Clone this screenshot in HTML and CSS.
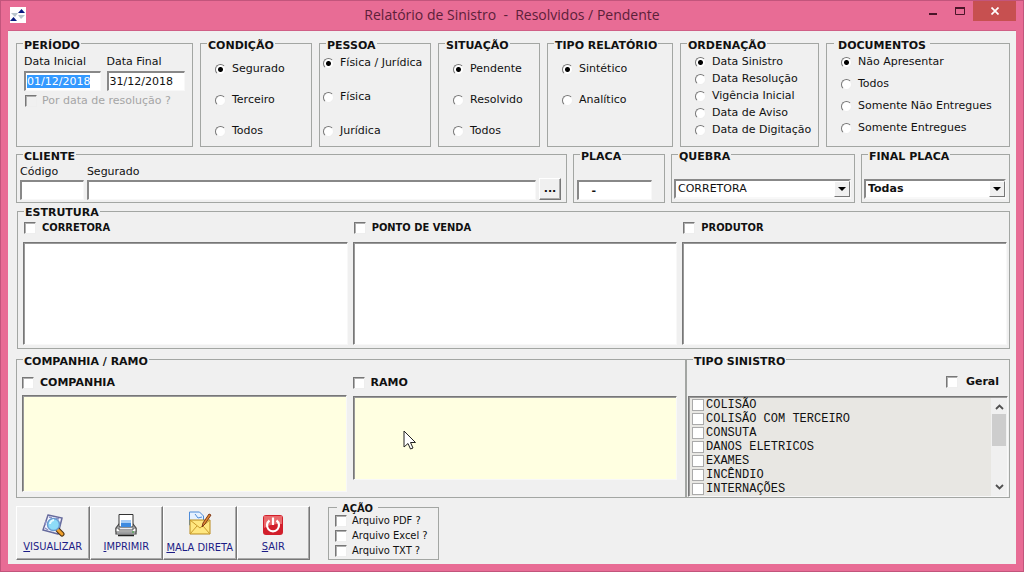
FILE: index.html
```html
<!DOCTYPE html>
<html lang="pt-BR">
<head>
<meta charset="utf-8">
<title>Relatório de Sinistro</title>
<link rel="stylesheet" href="styles.css">
</head>
<body>
<div class="window">
  <header class="titlebar">
    <svg class="app-icon" viewBox="0 0 16 16" aria-hidden="true">
      <rect width="16" height="16" fill="#fff"/>
      <path d="M1 6h7l-3 4zM8 8h7l-4 4z" fill="#b9c4cc"/>
      <path d="M8 6h7l-3.500-4zM0 14h7l-3.500-4z" fill="#0a1a80"/>
    </svg>
    <h1 class="title">Relatório de Sinistro  -  Resolvidos / Pendente</h1>
    <div class="controls">
      <button class="ctl" aria-label="Minimizar"><svg width="10" height="12" viewBox="0 0 10 12"><path d="M1 9h8" stroke="#4a1529" stroke-width="2"/></svg></button>
      <button class="ctl" aria-label="Maximizar"><svg width="10" height="10" viewBox="0 0 10 10"><path d="M.5 1v7.500h9V1" fill="none" stroke="#4a1529"/><path d="M0 2h10" stroke="#4a1529" stroke-width="2"/></svg></button>
      <button class="ctl close" aria-label="Fechar"><svg width="8" height="8" viewBox="0 0 8 8"><path d="M.5.5l7 7M7.500.5l-7 7" stroke="#fff" stroke-width="1.700"/></svg></button>
    </div>
  </header>

  <main class="client">
    <div class="row filters">
      <fieldset class="group">
        <legend>PERÍODO</legend>
        <div class="period">
          <div class="field date-start"><label for="di">Data Inicial</label><input class="box" id="di" type="text" value="01/12/2018"></div>
          <div class="field date-end"><label for="df">Data Final</label><input class="box" id="df" type="text" value="31/12/2018"></div>
        </div>
        <label class="opt disabled"><input type="checkbox" disabled>Por data de resolução ?</label>
      </fieldset>
      <fieldset class="group">
        <legend>CONDIÇÃO</legend>
        <div class="opts">
          <label class="opt"><input type="radio" name="cond" checked>Segurado</label>
          <label class="opt"><input type="radio" name="cond">Terceiro</label>
          <label class="opt"><input type="radio" name="cond">Todos</label>
        </div>
      </fieldset>
      <fieldset class="group">
        <legend>PESSOA</legend>
        <div class="opts wide">
          <label class="opt"><input type="radio" name="pes" checked>Física / Jurídica</label>
          <label class="opt"><input type="radio" name="pes">Física</label>
          <label class="opt"><input type="radio" name="pes">Jurídica</label>
        </div>
      </fieldset>
      <fieldset class="group">
        <legend>SITUAÇÃO</legend>
        <div class="opts">
          <label class="opt"><input type="radio" name="sit" checked>Pendente</label>
          <label class="opt"><input type="radio" name="sit">Resolvido</label>
          <label class="opt"><input type="radio" name="sit">Todos</label>
        </div>
      </fieldset>
      <fieldset class="group">
        <legend>TIPO RELATÓRIO</legend>
        <div class="opts">
          <label class="opt"><input type="radio" name="tipo" checked>Sintético</label>
          <label class="opt"><input type="radio" name="tipo">Analítico</label>
        </div>
      </fieldset>
      <fieldset class="group">
        <legend>ORDENAÇÃO</legend>
        <div class="opts dense">
          <label class="opt"><input type="radio" name="ord" checked>Data Sinistro</label>
          <label class="opt"><input type="radio" name="ord">Data Resolução</label>
          <label class="opt"><input type="radio" name="ord">Vigência Inicial</label>
          <label class="opt"><input type="radio" name="ord">Data de Aviso</label>
          <label class="opt"><input type="radio" name="ord">Data de Digitação</label>
        </div>
      </fieldset>
      <fieldset class="group documents">
        <legend>DOCUMENTOS</legend>
        <div class="opts medium">
          <label class="opt"><input type="radio" name="doc" checked>Não Apresentar</label>
          <label class="opt"><input type="radio" name="doc">Todos</label>
          <label class="opt"><input type="radio" name="doc">Somente Não Entregues</label>
          <label class="opt"><input type="radio" name="doc">Somente Entregues</label>
        </div>
      </fieldset>
    </div>

    <div class="row lookup">
      <fieldset class="group">
        <legend>CLIENTE</legend>
        <div class="customer">
          <div class="field code"><label for="cod">Código</label><input class="box" id="cod" type="text"></div>
          <div class="field name"><label for="seg">Segurado</label><input class="box" id="seg" type="text"></div>
          <button class="browse" aria-label="Procurar segurado">...</button>
        </div>
      </fieldset>
      <fieldset class="group">
        <legend>PLACA</legend>
        <div class="lower plate"><input class="box" type="text" aria-label="Placa" value="   -"></div>
      </fieldset>
      <fieldset class="group">
        <legend>QUEBRA</legend>
        <div class="lower"><div class="combo"><select aria-label="Quebra"><option>CORRETORA</option></select><span class="drop"></span></div></div>
      </fieldset>
      <fieldset class="group">
        <legend>FINAL PLACA</legend>
        <div class="lower"><div class="combo strong"><select aria-label="Final placa"><option>Todas</option></select><span class="drop"></span></div></div>
      </fieldset>
    </div>

    <fieldset class="group structure">
      <legend>ESTRUTURA</legend>
      <div class="columns">
        <section><label class="opt head narrow"><input type="checkbox">CORRETORA</label><div class="list"></div></section>
        <section><label class="opt head narrow"><input type="checkbox">PONTO DE VENDA</label><div class="list"></div></section>
        <section><label class="opt head narrow"><input type="checkbox">PRODUTOR</label><div class="list"></div></section>
      </div>
    </fieldset>

    <div class="row lower-panels">
      <fieldset class="group company">
        <legend>COMPANHIA / RAMO</legend>
        <div class="pair">
          <section><label class="opt head"><input type="checkbox">COMPANHIA</label><div class="list cream"></div></section>
          <section><label class="opt head"><input type="checkbox">RAMO</label><div class="list cream short">
            <svg class="pointer" width="13" height="21" viewBox="0 0 13 21" aria-hidden="true"><path d="M1 1v16l4-3.500 2.500 5.500 2.500-1-2.500-5.500h5z" fill="#fff" stroke="#222"/></svg>
          </div></section>
        </div>
      </fieldset>
      <fieldset class="group claims">
        <legend>TIPO SINISTRO</legend>
        <label class="opt head all"><input type="checkbox">Geral</label>
        <div class="list claim-list">
          <div class="items">
            <label class="item"><input type="checkbox">COLISÃO</label>
            <label class="item"><input type="checkbox">COLISÃO COM TERCEIRO</label>
            <label class="item"><input type="checkbox">CONSUTA</label>
            <label class="item"><input type="checkbox">DANOS ELETRICOS</label>
            <label class="item"><input type="checkbox">EXAMES</label>
            <label class="item"><input type="checkbox">INCÊNDIO</label>
            <label class="item"><input type="checkbox">INTERNAÇÕES</label>
          </div>
          <div class="scroll">
            <svg width="9" height="6" viewBox="0 0 9 6"><path d="M1 5l3.500-3.500L8 5" fill="none" stroke="#505050" stroke-width="1.800"/></svg>
            <div class="thumb"></div>
            <svg width="9" height="6" viewBox="0 0 9 6"><path d="M1 1l3.500 3.500L8 1" fill="none" stroke="#505050" stroke-width="1.800"/></svg>
          </div>
        </div>
      </fieldset>
    </div>

    <footer class="actions">
      <div class="toolbar">
        <button class="tool">
          <svg width="24" height="24" viewBox="0 0 24 24" aria-hidden="true"><path d="M7 2l14 3-4 16L2 17z" fill="#f4f6ff" stroke="#666a9c" stroke-width="1.500"/><path d="M8 4l3 1M15 5l3 1M5 8l-1 4M4 15l3 2" stroke="#8b8fc4" stroke-width="1.500"/><path d="M17 17l4 4" stroke="#4a3010" stroke-width="5" stroke-linecap="round"/><path d="M17 17l4 4" stroke="#f0a02c" stroke-width="3" stroke-linecap="round"/><circle cx="12.500" cy="11.500" r="6" fill="#8edcf8" stroke="#6a9bd0" stroke-width="1.500"/><path d="M9 11c0-2 2-4 4-4" fill="none" stroke="#e4faff" stroke-width="2"/></svg>
          <span><u>V</u>ISUALIZAR</span>
        </button>
        <button class="tool">
          <svg width="24" height="24" viewBox="0 0 24 24" aria-hidden="true"><path d="M5 11L2 15v6h20v-6l-3-4z" fill="#eceef2" stroke="#444" stroke-width="1.200"/><path d="M5 1.500h14V14H5z" fill="#fff" stroke="#333"/><path d="M7 9h10v5H7z" fill="#3f8be0"/><path d="M7 7h10v3H7z" fill="#a8cdf5"/><path d="M2 15h3v2h14v-2h3v4H2z" fill="#fff" stroke="#555"/><path d="M4 22.500h16" stroke="#222" stroke-width="1.500"/><path d="M18 19h2" stroke="#3a3"/></svg>
          <span><u>I</u>MPRIMIR</span>
        </button>
        <button class="tool tall">
          <svg width="24" height="24" viewBox="0 0 24 24" aria-hidden="true"><path d="M1.500 1h10l4 4v9h-14z" fill="#e5f1ff" stroke="#4d8bd8"/><path d="M7 3l3 4 4-1" fill="none" stroke="#4d8bd8"/><path d="M2 9h20v14H2z" fill="#ffe780" stroke="#b98a1c"/><path d="M2 9l10 8L22 9M2 23l7-8M22 23l-7-8" fill="none" stroke="#c99a2c"/><path d="M23 4l-6 9-3 3 1-4 6-9z" fill="#e08a30" stroke="#803818"/></svg>
          <span><u>M</u>ALA DIRETA</span>
        </button>
        <button class="tool">
          <svg width="24" height="24" viewBox="0 0 24 24" aria-hidden="true"><rect x="2" y="2" width="20" height="20" rx="3" fill="#d21f2b"/><path d="M3 3h18v8c-6 0-12 0-18 4z" fill="#ea6a6c"/><path d="M8.500 7.500a6 6 0 1 0 7 0" fill="none" stroke="#fff" stroke-width="2.200"/><path d="M12 4.500v7.500" stroke="#fff" stroke-width="2.200"/></svg>
          <span><u>S</u>AIR</span>
        </button>
      </div>
      <fieldset class="group export">
        <legend>AÇÃO</legend>
        <label class="opt"><input type="checkbox">Arquivo PDF ?</label>
        <label class="opt"><input type="checkbox">Arquivo Excel ?</label>
        <label class="opt"><input type="checkbox">Arquivo TXT ?</label>
      </fieldset>
    </footer>
  </main>
</div>
<script src="main.js"></script>
</body>
</html>
```
FILE: styles.css
```css
* { box-sizing: border-box; }
body {
  margin: 0;
  font: 11px/14px Verdana, "DejaVu Sans", sans-serif;
  color: #111;
  background: #e86c95;
}
input, select, button { font: inherit; color: inherit; margin: 0; }
button { padding: 0; }
.window {
  min-height: 100vh;
  display: flex;
  flex-direction: column;
  padding: 0 7px 7px;
  background: #e86c95;
  border: 1px solid #c2557c;
}

/* Title bar */
.titlebar {
  height: 29px;
  display: grid;
  grid-template-columns: 1fr auto 1fr;
}
.app-icon { width: 16px; height: 16px; margin: 6px 2px; }
.title {
  margin: 4px 0 0;
  font: 14px/20px "Open Sans", "Noto Sans", sans-serif;
  color: #5c2039;
  white-space: pre;
}
.controls { display: flex; justify-content: flex-end; }
.ctl {
  width: 27px;
  height: 20px;
  display: flex;
  align-items: center;
  justify-content: center;
  border: 0;
  background: transparent;
}
.close { width: 43px; background: #c75050; }

/* Client area */
.client {
  flex: 1;
  display: flex;
  flex-direction: column;
  padding: 7px 6px 4px 8px;
  background: #f0f0f0;
  border-top: 1px solid #d05f86;
}
.row { display: grid; }
.filters { grid-template-columns: 177fr 112fr 112fr 102fr 126fr 139fr 184fr; gap: 7px; }
.lookup { grid-template-columns: 551fr 92fr 184fr 149fr; gap: 6px; margin-top: 2px; }
.lower-panels { grid-template-columns: 670fr 324fr; margin-top: 5px; }

.group {
  min-width: 0;
  margin: 0;
  padding: 0;
  border: 1px solid #a3a6a3;
}
legend {
  height: 11px;
  margin-left: 6px;
  padding: 0 1px;
  font-weight: bold;
  line-height: 16px;
  white-space: nowrap;
}
.documents legend { margin-left: 7px; padding: 0 4px; }

/* Options */
.opts { display: flex; flex-direction: column; gap: 17px; padding: 13px 0 7px 14px; }
.opts.wide { gap: 20px; padding: 7px 0 8px 3px; }
.opts.dense { gap: 3px; padding-top: 6px; }
.opts.medium { gap: 8px; padding-top: 6px; }
.opt { display: flex; align-items: center; gap: 5px; white-space: nowrap; }
input[type="radio"], input[type="checkbox"] {
  appearance: none;
  flex: none;
  width: 12px;
  height: 12px;
  background: #fff;
  border: 1px solid;
  border-color: #777 #eee #eee #777;
}
input[type="radio"] { width: 11px; height: 11px; margin-right: 1px; border-radius: 50%; }
input[type="radio"]:checked { background: radial-gradient(circle, #000 2px, #fff 3px); }
input[type="checkbox"] { box-shadow: inset 1px 1px 0 #b0b0b0; }
.disabled { color: #a5a5a5; padding: 3px 8px; }
.disabled input[type="checkbox"] { background: #f0f0f0; }

/* Fields */
.field { display: flex; flex-direction: column; gap: 2px; min-width: 0; }
.box {
  width: 100%;
  height: 20px;
  padding: 0 1px;
  background: #fff;
  border: 2px solid;
  border-color: #888 #f8f8f8 #f8f8f8 #888;
  border-right-width: 1px;
  border-bottom-width: 1px;
  outline: 0;
}
.box::selection { background: #3399ff; color: #fff; }
.period { display: flex; gap: 6px; padding: 6px 7px 0; }
.date-start { flex: 77; }
.date-end { flex: 79; }
.customer { display: flex; align-items: flex-end; gap: 3px; padding: 5px 5px 2px 3px; }
.customer .field { gap: 1px; }
.code { flex: 64; }
.name { flex: 450; }
.browse {
  width: 22px;
  height: 22px;
  font-weight: bold;
  background: #f0f0f0;
  border: 1px solid;
  border-color: #fff #777 #777 #fff;
  box-shadow: inset -1px -1px 0 #aaa;
}
.lower { padding: 19px 3px 3px 2px; }
.plate { padding: 20px 12px 2px 3px; }
.plate .box { white-space: pre; font-weight: bold; }
.combo { position: relative; }
.combo select {
  width: 100%;
  height: 20px;
  display: block;
  appearance: none;
  padding: 0 20px 0 2px;
  border: 2px solid;
  border-color: #888 #f8f8f8 #f8f8f8 #888;
  border-radius: 0;
  background: #fff;
}
.strong select { font-weight: bold; }
.drop {
  position: absolute;
  top: 2px;
  right: 1px;
  width: 16px;
  height: 16px;
  display: grid;
  place-items: center;
  background: #f0f0f0;
  border: 1px solid;
  border-color: #fff #777 #777 #fff;
  pointer-events: none;
}
.drop::after { content: ""; border: 4px solid transparent; border-top-color: #000; border-bottom: 0; }

/* Lists */
.head { font-weight: bold; gap: 6px; }
.narrow { font-family: Tahoma, "DejaVu Sans Condensed", "DejaVu Sans", sans-serif; }
.list {
  height: 103px;
  background: #fff;
  border: 1px solid;
  border-color: #777 #f8f8f8 #f8f8f8 #777;
  box-shadow: inset 1px 1px 0 #999;
}
.structure { margin: 3px 0 0 1px; }
.structure legend { height: 10px; line-height: 14px; overflow: hidden; }
.columns { display: grid; grid-template-columns: repeat(3, 1fr); gap: 5px; padding: 5px 2px 3px 5px; }
.columns .head { margin-bottom: 7px; padding-left: 1px; }
.pair { display: grid; grid-template-columns: 1fr 1fr; gap: 6px; padding: 11px 8px 5px 5px; }
.pair .head { margin-bottom: 5px; }
.cream { height: 97px; background: #ffffe1; }
.short { position: relative; height: 84px; margin-top: 6px; }
.pointer { position: absolute; left: 49px; top: 33px; }
.claims { display: flex; flex-direction: column; }
.all { align-self: flex-end; padding: 10px 10px 7px 0; gap: 8px; }
.claim-list {
  height: 101px;
  display: flex;
  margin: 0 1px 0 1px;
  padding: 1px 0 0 3px;
  background: #e8e7e3;
}
.items { flex: 1; display: flex; flex-direction: column; }
.item {
  height: 14px;
  display: flex;
  align-items: center;
  gap: 2px;
  font: 12px/14px "Courier New", "Liberation Mono", monospace;
}
.item input[type="checkbox"] { border-color: #aaa; box-shadow: none; }
.scroll {
  width: 16px;
  display: flex;
  flex-direction: column;
  align-items: center;
  padding: 6px 0;
  background: #f0f0f0;
}
.thumb { width: 14px; height: 32px; margin: 4px 0 auto; background: #cdcdcd; }

/* Footer */
.actions { display: flex; align-items: flex-start; gap: 18px; margin-top: 4px; }
.toolbar { width: 294px; display: flex; margin-top: 4px; }
.tool {
  flex: 1;
  height: 54px;
  display: flex;
  flex-direction: column;
  align-items: center;
  justify-content: center;
  gap: 3px;
  font: 11px/14px Tahoma, "DejaVu Sans Condensed", "DejaVu Sans", sans-serif;
  color: #1c1c86;
  background: #f0f0f0;
  border: 1px solid;
  border-color: #fff #777 #777 #fff;
  box-shadow: inset -1px -1px 0 #aaa;
  white-space: nowrap;
}
.tall { gap: 6px; }
.export { width: 111px; padding: 0 0 1px 6px; font-family: Tahoma, "DejaVu Sans Condensed", "DejaVu Sans", sans-serif; }
.export legend { margin-left: 2px; padding: 0 5px; line-height: 14px; }
.export .opt { height: 15px; gap: 5px; }
```
FILE: main.js
```js
const first = document.getElementById("di");
first.focus();
first.select();
```
